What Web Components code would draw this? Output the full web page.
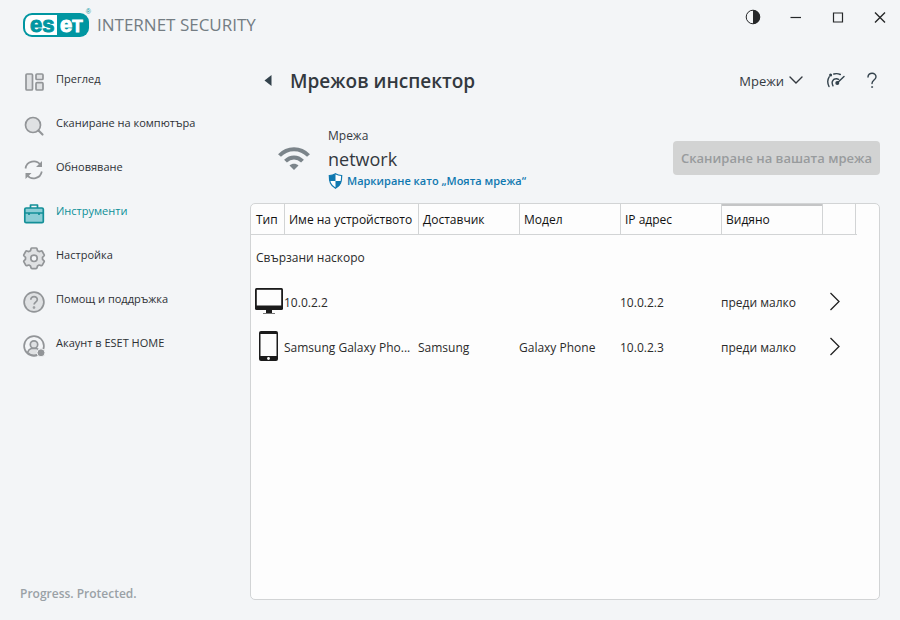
<!DOCTYPE html>
<html lang="bg">
<head>
<meta charset="utf-8">
<title>ESET Internet Security</title>
<style>
html, body { height: 100%; margin: 0; }
body {
  --ink: #33393f; --teal: #0b8f97; --blue: #0f78b0; --line: #d2d4d5;
  background: #f3f5f7; color: var(--ink);
  font-family: "Open Sans", "Noto Sans", sans-serif; font-size: 12px; line-height: 18px;
}
</style>
</head>
<body>
<security-app></security-app>

<template id="t-app">
  <style>
    :host { display: grid; grid-template-columns: 250px minmax(0, 1fr); grid-template-rows: 50px minmax(0, 1fr); min-height: 100vh; }
    aside { display: flex; flex-direction: column; justify-content: space-between; padding: 10px 0 17px 20px; }
    nav { display: flex; flex-direction: column; }
    small { font-size: 12px; font-weight: 600; line-height: 18px; color: #9aa1a6; }
    main { display: flex; flex-direction: column; padding: 12px 20px 20px 0; }
    device-table { flex: 1; }
  </style>
  <brand-logo></brand-logo>
  <window-controls></window-controls>
  <aside>
    <nav>
      <nav-item icon="grid">Преглед</nav-item>
      <nav-item icon="search">Сканиране на компютъра</nav-item>
      <nav-item icon="sync">Обновяване</nav-item>
      <nav-item icon="case" active>Инструменти</nav-item>
      <nav-item icon="gear">Настройка</nav-item>
      <nav-item icon="help">Помощ и поддръжка</nav-item>
      <nav-item icon="user">Акаунт в ESET HOME</nav-item>
    </nav>
    <small>Progress. Protected.</small>
  </aside>
  <main>
    <page-header>Мрежов инспектор</page-header>
    <network-summary>
      <span slot="label">Мрежа</span>
      <span slot="name">network</span>
      <span slot="link">Маркиране като „Моята мрежа“</span>
      <span slot="action">Сканиране на вашата мрежа</span>
    </network-summary>
    <device-table></device-table>
  </main>
</template>

<template id="t-logo">
  <style>
    :host { display: flex; align-items: center; padding-left: 23px; gap: 8px; white-space: nowrap; }
    .badge { position: relative; flex: none; display: flex; box-sizing: border-box; width: 66px; height: 24px; padding: 2px; border-radius: 9px; background: #0096a1;
      font: bold 22px/19px "Liberation Sans", sans-serif; color: #fff; -webkit-text-stroke: 1px currentColor; }
    .left { flex: none; width: 32px; height: 20px; box-sizing: border-box; padding-left: 5px; background: #fff; color: #0096a1; border-radius: 7px 0 0 7px; }
    .right { padding-left: 3px; }
    .t { font-size: 17px; }
    .r { position: absolute; right: -2px; top: -5px; font: 7px/8px "Liberation Sans", sans-serif; color: #0096a1; -webkit-text-stroke: 0; }
    .name { font: 17px/24px "Open Sans", sans-serif; color: #747d83; }
  </style>
  <span class="badge"><span class="left">es</span><span class="right">e<span class="t">T</span></span><span class="r">®</span></span>
  <span class="name">INTERNET SECURITY</span>
</template>

<template id="t-window">
  <style>
    :host { display: flex; justify-content: flex-end; align-items: flex-start; padding: 6px 9px 0 0; gap: 20px; }
    button { display: grid; place-items: center; width: 22px; height: 22px; padding: 0; border: 0; background: none; color: #252729; }
    button:first-child { margin-right: 2px; }
    svg { width: 18px; height: 18px; fill: none; stroke: currentColor; }
  </style>
  <button aria-label="Контраст"><svg viewBox="0 0 18 18"><circle cx="8" cy="9" r="6.8"/><path d="M8 2a7 7 0 0 1 0 14z" fill="currentColor" stroke="none"/></svg></button>
  <button aria-label="Минимизиране"><svg viewBox="0 0 18 18"><path d="M3.500 9.500h10.500" stroke-width="1.200"/></svg></button>
  <button aria-label="Максимизиране"><svg viewBox="0 0 18 18"><path d="M4.500 5h9v9h-9z" stroke-width="1.200"/></svg></button>
  <button aria-label="Затваряне"><svg viewBox="0 0 18 18"><path d="M4 4.500l10 10M14 4.500l-10 10" stroke-width="1.400"/></svg></button>
</template>

<template id="t-nav">
  <style>
    :host { display: block; color: #2d3135; }
    :host([active]) { color: var(--teal); }
    a { display: flex; gap: 8px; height: 44px; color: inherit; text-decoration: none; font-size: 11px; line-height: 18px; }
    span { padding-top: 10px; }
    svg { width: 28px; height: 28px; margin-top: 8px; fill: #dfe1e3; stroke: #929598; stroke-width: 1.7; stroke-linejoin: round; }
    :host([active]) svg { fill: #8bcdd5; stroke: #138f98; }
  </style>
  <a href="#"><svg viewBox="0 0 28 28"></svg><span><slot></slot></span></a>
</template>

<template id="t-header">
  <style>
    :host { display: flex; align-items: center; height: 38px; padding: 0 2px 0 12px; }
    button { display: grid; place-items: center; padding: 0; border: 0; background: none; color: #33424c; font: inherit; }
    .back { width: 12px; height: 20px; margin-right: 16px; }
    h1 { flex: 1; margin: 0; font-size: 19px; line-height: 28px; font-weight: 600; }
    .menu { display: flex; align-items: center; gap: 4px; margin-right: 22px; font-size: 13px; line-height: 20px; color: var(--ink); }
    .gauge { margin-right: 20px; }
    svg { display: block; fill: none; stroke: currentColor; stroke-linecap: round; }
  </style>
  <button class="back" aria-label="Назад"><svg width="8" height="12" viewBox="0 0 8 12"><path d="M7.500 0v11L.5 5.500z" fill="currentColor" stroke="none"/></svg></button>
  <h1><slot></slot></h1>
  <button class="menu">Мрежи <svg width="16" height="12" viewBox="0 0 16 12"><path d="M2 2l6 6 6-6" stroke-width="1.400"/></svg></button>
  <button class="gauge" aria-label="Скорост"><svg width="20" height="20" viewBox="0 0 20 20" fill="none" stroke-width="1.400">
    <path d="M3 15.500C1.300 12 1.400 8.500 3.200 5.800M7 14.800c-2-3.600-.2-6.600 2.800-7 1.200-.2 2 .1 2.800.5M7.800 3C10 2.300 12 2.400 14.300 3.500M11.500 11.800l6.500-6.300"/><circle cx="4.600" cy="4" r=".8"/><circle cx="11.300" cy="12" r="1.300" fill="currentColor"/></svg></button>
  <button aria-label="Помощ"><svg width="12" height="18" viewBox="0 0 12 18"><path d="M2 5C2 -.1 10.300 0 10 5c-.2 3-4 3.300-4 6.500" stroke-width="1.400"/><circle cx="6" cy="15" r=".6" fill="currentColor" stroke-width=".6"/></svg></button>
</template>

<template id="t-summary">
  <style>
    :host { display: flex; align-items: center; padding: 27px 0 14px 27px; }
    .wifi { width: 34px; height: 26px; margin-right: 17px; color: #7b848a; }
    .info { flex: 1; display: flex; flex-direction: column; align-items: flex-start; }
    .label { font-size: 12px; line-height: 18px; }
    .name { font-size: 18px; line-height: 28px; }
    a { display: flex; align-items: center; gap: 4px; color: var(--blue); text-decoration: none; font-size: 11px; font-weight: 600; line-height: 16px; }
    button { height: 34px; padding: 0 8px; border: 0; border-radius: 4px; background: #d2d3d3; color: #989b9d; font: 600 13px/18px "Open Sans", "Noto Sans", sans-serif; }
    svg { display: block; }
  </style>
  <svg class="wifi" viewBox="0 0 34 26" fill="none" stroke="currentColor" stroke-width="4"><path d="M2.500 10.500C10.500 2 23.500 2 31.500 10.500M8.500 16.200c5-5 12-5 17 0"/><path d="M17 25l-4.500-4.500c2.500-2.300 6.500-2.300 9 0z" fill="currentColor" stroke="none"/></svg>
  <div class="info">
    <span class="label"><slot name="label"></slot></span>
    <span class="name"><slot name="name"></slot></span>
    <a href="#"><svg width="15" height="16" viewBox="0 0 15 16"><path d="M7.500.8c2 1.300 4 1.700 6.200 1.700 0 6-.9 9.800-6.200 12.800C2.200 12.300 1.300 8.500 1.300 2.500 3.500 2.500 5.500 2.100 7.500.8z" fill="#fff" stroke="#0f78b0" stroke-width="1.200"/><path d="M7.500.8V8H1.700C1.400 6.400 1.300 4.600 1.300 2.500 3.500 2.500 5.500 2.100 7.500.8zM7.500 8h5.800c-.6 3.300-2.200 5.500-5.800 7.300z" fill="#0f78b0"/></svg><slot name="link"></slot></a>
  </div>
  <button disabled><slot name="action"></slot></button>
</template>

<template id="t-table">
  <style>
    :host { display: block; box-sizing: border-box; padding-right: 22px; border: 1px solid var(--line); border-radius: 5px; background: #fdfdfd; color: #2b2b2b; }
    table { width: 100%; table-layout: fixed; border-collapse: separate; border-spacing: 0; font-size: 12px; line-height: 18px; }
    th, td { box-sizing: border-box; padding: 2px 0 0; text-align: left; font-weight: 400; white-space: nowrap; }
    thead th { height: 31px; padding-left: 4px; border-left: 1px solid var(--line); border-bottom: 1px solid var(--line); color: #111; }
    thead th:first-child { border-left: 0; padding-left: 5px; }
    thead th:last-child { padding: 0; }
    thead th.sorted { box-shadow: inset 0 2px #c4c5c6; }
    .group th { height: 44px; padding-left: 5px; }
    td { height: 45px; }
    td:first-child, td:last-child { padding: 0; }
    .type { width: 33px; } .col { width: 101px; } .go { width: 33px; } .end { width: 2px; }
    td svg { display: block; margin-left: 3px; }
    button { display: block; padding: 0; margin-left: 4px; border: 0; background: none; }
    button svg { margin: 0; }
  </style>
  <table>
    <colgroup><col class="type"><col><col class="col"><col class="col"><col class="col"><col class="col"><col class="go"><col class="end"></colgroup>
    <thead><tr><th>Тип</th><th>Име на устройството</th><th>Доставчик</th><th>Модел</th><th>IP адрес</th><th class="sorted">Видяно</th><th></th><th></th></tr></thead>
    <tbody><tr class="group"><th colspan="8">Свързани наскоро</th></tr></tbody>
  </table>
</template>

<script>
const NAV_ICONS = {
  grid: '<rect x="6" y="6" width="6.500" height="16" rx="1"/><rect x="16" y="6" width="7" height="5.500" rx="1"/><rect x="16" y="14.700" width="7" height="7.300" rx="1"/>',
  search: '<circle cx="13" cy="13" r="7.500"/><path d="M18.500 18.500l4 4" stroke-width="2.200" stroke-linecap="round"/>',
  sync: '<g fill="none"><path d="M5.500 12.500A8.300 8.300 0 0 1 20.500 9M21.800 15.500A8.300 8.300 0 0 1 7 19"/></g><path d="M22 5v6h-6zM5.500 23v-6h6z" fill="#929598" stroke="none"/>',
  case: '<path d="M10.500 8V5h7v3" fill="none"/><rect x="4.800" y="8" width="18.500" height="14.700" rx="1.300"/><path d="M5 13h18M9 13v2M19 13v2"/>',
  gear: '<path d="M12 4h4q.8 0 1 .8l.5 1.900 1.600.9 2-.6q.8-.2 1.200.5l1.800 3.200q.4.700-.2 1.300l-1.400 1.300v2l1.400 1.300q.6.600.2 1.300l-1.800 3.200q-.4.700-1.200.5l-2-.6-1.600.9-.5 1.900q-.2.800-1 .8h-4q-.8 0-1-.8l-.5-1.900-1.600-.9-2 .6q-.8.200-1.200-.5l-1.800-3.200q-.4-.7.2-1.300l1.400-1.300v-2l-1.400-1.300q-.6-.6-.2-1.300l1.800-3.200q.4-.7 1.200-.5l2 .6 1.600-.9.5-1.900q.2-.8 1-.8z"/><circle cx="14" cy="14.300" r="3.200" fill="#f3f5f7"/>',
  help: '<circle cx="14" cy="14" r="9.900"/><path d="M10.800 11.800c0-4.400 6.600-4.200 6.500 0-.1 2.300-3.200 2.400-3.200 4.700" fill="none"/><circle cx="14" cy="19.500" r=".5"/>',
  user: '<circle cx="14" cy="14" r="9.900" fill="#f3f5f7"/><path d="M7.500 20.500c1-3 3-3.800 4.300-4.200h4.400c1.300.4 3.300 1.200 4.300 4.200-4 3.700-9 3.700-13 0z"/><circle cx="14" cy="12.500" r="3.700"/><circle cx="21" cy="20.800" r="4" fill="#929598" stroke="#f3f5f7" stroke-width="1"/>'
};
const DEVICE_ICONS = {
  monitor: '<svg width="30" height="28" viewBox="0 0 30 28" role="img" aria-label="Компютър"><rect x="1" y="0" width="28" height="22" rx="1.500" fill="#1b1b1b"/><rect x="2.800" y="1.800" width="24.400" height="15.700" fill="#fdfdfd"/><path d="M12 22h6v3h-6z" fill="#1b1b1b"/><path d="M9 25.500h12" stroke="#777"/></svg>',
  phone: '<svg width="30" height="32" viewBox="0 0 30 32" role="img" aria-label="Телефон"><rect x="5" y="0" width="19" height="30" rx="2" fill="#1b1b1b"/><rect x="6.500" y="3" width="16" height="22" fill="#fdfdfd"/><circle cx="14.500" cy="27.500" r="1.400" fill="#fdfdfd"/></svg>'
};
const DEVICES = [
  ['monitor', '10.0.2.2', '', '', '10.0.2.2', 'преди малко'],
  ['phone', 'Samsung Galaxy Pho...', 'Samsung', 'Galaxy Phone', '10.0.2.3', 'преди малко']
];

class TemplateElement extends HTMLElement {
  constructor() {
    super();
    this.attachShadow({ mode: 'open' }).append(
      document.getElementById(this.constructor.template).content.cloneNode(true));
  }
}
class BrandLogo extends TemplateElement { static template = 't-logo'; }
class WindowControls extends TemplateElement { static template = 't-window'; }
class PageHeader extends TemplateElement { static template = 't-header'; }
class NetworkSummary extends TemplateElement { static template = 't-summary'; }
class NavItem extends TemplateElement {
  static template = 't-nav';
  connectedCallback() {
    this.shadowRoot.querySelector('svg').innerHTML = NAV_ICONS[this.getAttribute('icon')];
    if (this.hasAttribute('active')) this.shadowRoot.querySelector('a').setAttribute('aria-current', 'page');
  }
}
class DeviceTable extends TemplateElement {
  static template = 't-table';
  connectedCallback() {
    const body = this.shadowRoot.querySelector('tbody');
    for (const [icon, ...cells] of DEVICES) {
      const row = body.insertRow();
      row.insertCell().innerHTML = DEVICE_ICONS[icon];
      for (const text of cells) row.insertCell().textContent = text;
      row.insertCell().innerHTML = '<button aria-label="Подробности"><svg width="16" height="20" viewBox="0 0 16 20"><path d="M4.500 1l8.500 8.500-8.500 8.500" fill="none" stroke="#222" stroke-width="1.300"/></svg></button>';
    }
  }
}
class SecurityApp extends TemplateElement { static template = 't-app'; }

customElements.define('brand-logo', BrandLogo);
customElements.define('window-controls', WindowControls);
customElements.define('nav-item', NavItem);
customElements.define('page-header', PageHeader);
customElements.define('network-summary', NetworkSummary);
customElements.define('device-table', DeviceTable);
customElements.define('security-app', SecurityApp);
</script>
</body>
</html>
